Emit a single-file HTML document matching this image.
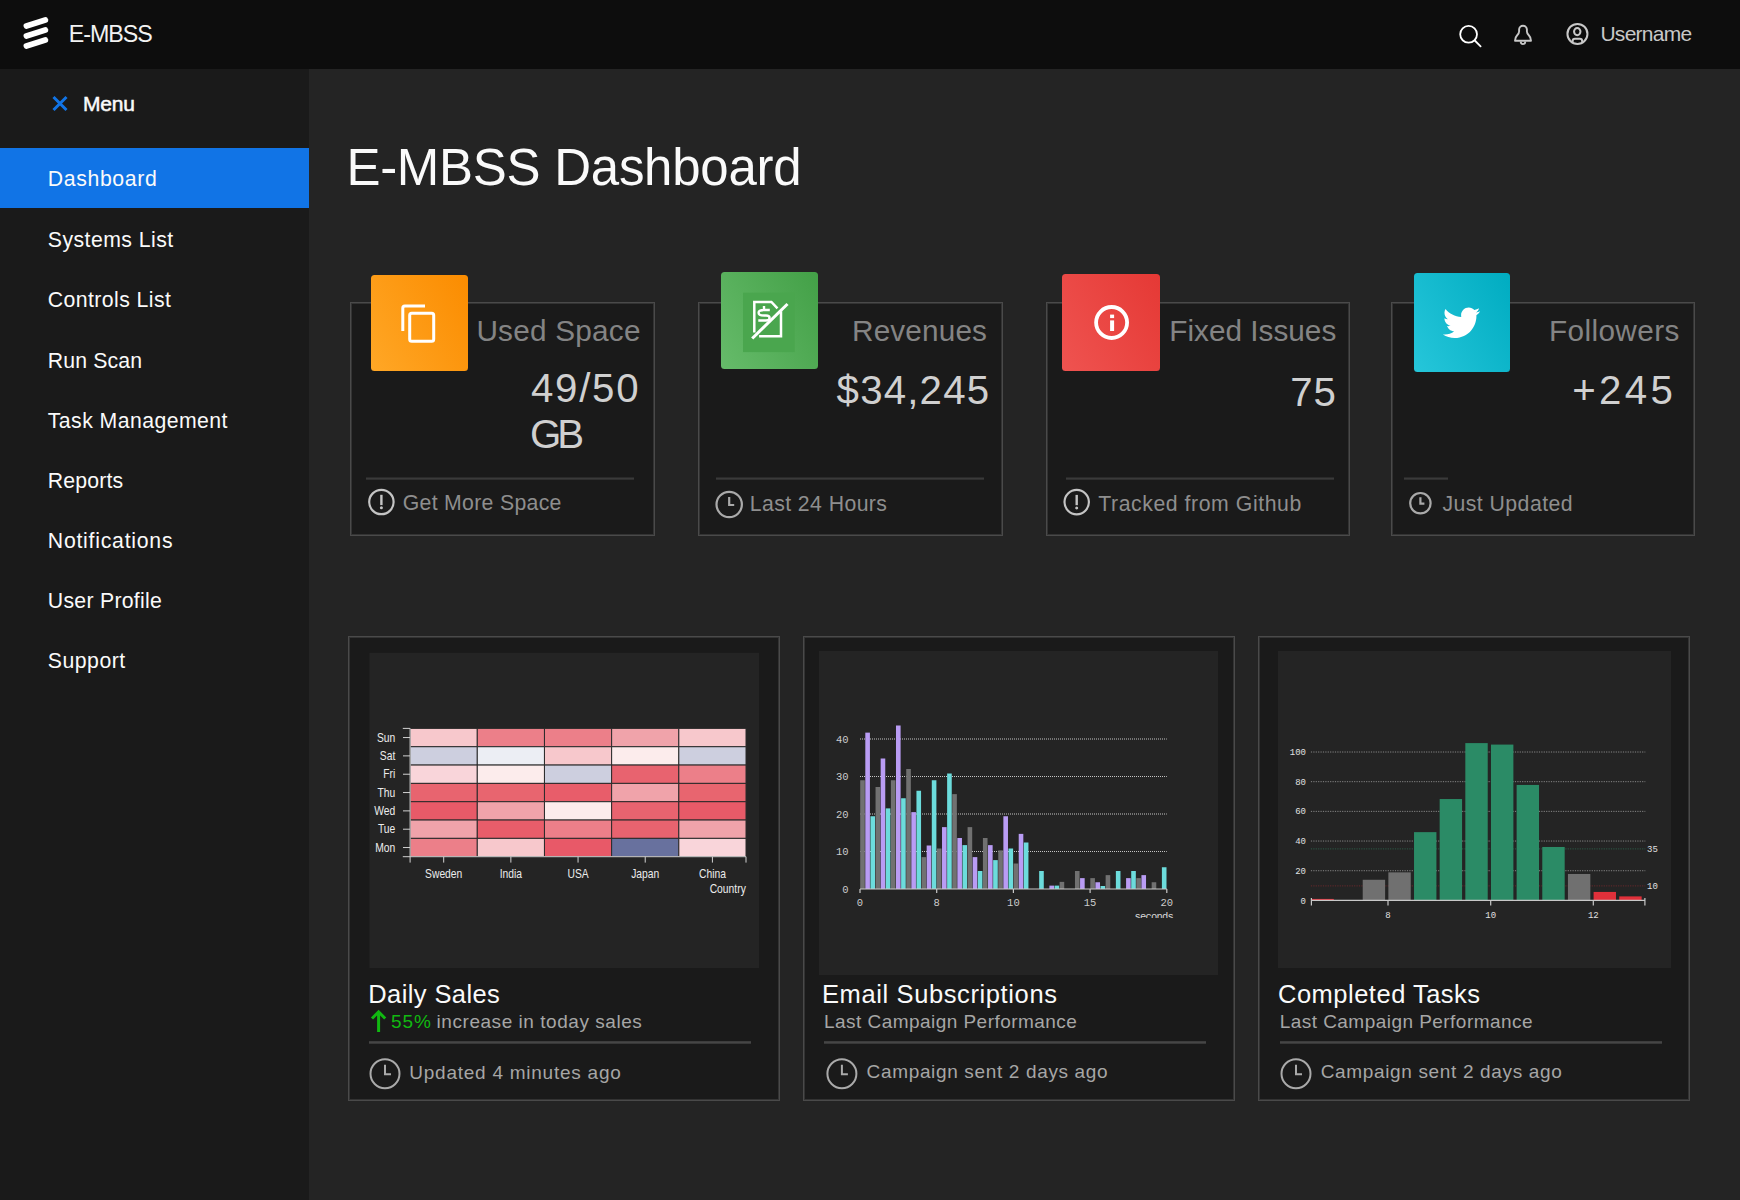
<!DOCTYPE html>
<html><head><meta charset="utf-8"><title>E-MBSS Dashboard</title><style>html,body{margin:0;padding:0;background:#242424;width:1740px;height:1200px;overflow:hidden;font-family:"Liberation Sans",sans-serif}</style></head><body>
<svg width="1740" height="1200" viewBox="0 0 1740 1200" style="position:absolute;left:0;top:0">
<rect x="0" y="0" width="1740" height="1200" fill="#242424"/>
<rect x="0" y="0" width="1740" height="69" fill="#0d0d0d"/>
<rect x="0" y="69" width="309" height="1131" fill="#1a1a1a"/>
<rect x="0" y="148" width="309" height="60" fill="#1174e6"/>
<line x1="26.4" y1="26" x2="45.3" y2="20" stroke="#fff" stroke-width="5.7" stroke-linecap="round"/>
<line x1="26.4" y1="36" x2="45.3" y2="30" stroke="#fff" stroke-width="5.7" stroke-linecap="round"/>
<line x1="26.4" y1="46" x2="45.3" y2="40" stroke="#fff" stroke-width="5.7" stroke-linecap="round"/>
<text x="68.70" y="42.20" font-family="Liberation Sans" font-size="23.25" fill="#f2f2f2" letter-spacing="-1.000">E-MBSS</text>
<circle cx="1468.6" cy="34.3" r="8.4" fill="none" stroke="#fff" stroke-width="1.8"/>
<line x1="1474.8" y1="40.5" x2="1480.6" y2="46.3" stroke="#fff" stroke-width="1.8" stroke-linecap="round"/>
<path d="M1515 40.8 H1531 Q1531 37.5 1529 35.5 Q1526.9 33.5 1526.9 31.5 V29.6 A3.9 3.9 0 0 0 1519.1 29.6 V31.5 Q1519.1 33.5 1517 35.5 Q1515 37.5 1515 40.8 Z" fill="none" stroke="#c8c8c8" stroke-width="1.9" stroke-linejoin="round"/>
<path d="M1520.7 41.6 A2.3 2.5 0 0 0 1525.3 41.6" fill="none" stroke="#c8c8c8" stroke-width="1.9"/>
<circle cx="1577.45" cy="33.9" r="10" fill="none" stroke="#c8c8c8" stroke-width="2"/>
<ellipse cx="1577.25" cy="31.6" rx="3.2" ry="3.6" fill="none" stroke="#c8c8c8" stroke-width="2"/>
<path d="M1572.6 42.6 V41.2 Q1572.6 38.8 1575 38.8 H1579.8 Q1582.2 38.8 1582.2 41.2 V42.6" fill="none" stroke="#c8c8c8" stroke-width="2"/>
<text x="1600.40" y="41.10" font-family="Liberation Sans" font-size="21" fill="#c8c8c8" letter-spacing="-0.714">Username</text>
<path d="M53.5 97 L66.5 110 M66.5 97 L53.5 110" stroke="#1174e6" stroke-width="3"/>
<text x="83.00" y="110.90" font-family="Liberation Sans" font-size="21" fill="#fafafa" letter-spacing="-0.200" stroke="#fafafa" stroke-width="0.5">Menu</text>
<text x="47.80" y="186.20" font-family="Liberation Sans" font-size="21.25" fill="#fafafa" letter-spacing="0.625">Dashboard</text>
<text x="47.80" y="247.00" font-family="Liberation Sans" font-size="21.25" fill="#fafafa" letter-spacing="0.455">Systems List</text>
<text x="47.80" y="307.10" font-family="Liberation Sans" font-size="21.25" fill="#fafafa" letter-spacing="0.417">Controls List</text>
<text x="47.80" y="368.00" font-family="Liberation Sans" font-size="21.25" fill="#fafafa" letter-spacing="0.143">Run Scan</text>
<text x="47.80" y="427.70" font-family="Liberation Sans" font-size="21.25" fill="#fafafa" letter-spacing="0.429">Task Management</text>
<text x="47.80" y="487.90" font-family="Liberation Sans" font-size="21.25" fill="#fafafa" letter-spacing="0.167">Reports</text>
<text x="47.80" y="548.00" font-family="Liberation Sans" font-size="21.25" fill="#fafafa" letter-spacing="0.750">Notifications</text>
<text x="47.80" y="607.60" font-family="Liberation Sans" font-size="21.25" fill="#fafafa" letter-spacing="0.273">User Profile</text>
<text x="47.80" y="668.10" font-family="Liberation Sans" font-size="21.25" fill="#fafafa" letter-spacing="0.500">Support</text>
<text x="346.40" y="185.30" font-family="Liberation Sans" font-size="51.0" fill="#fafafa" letter-spacing="-0.267">E-MBSS Dashboard</text>
<rect x="350.5" y="302.5" width="304" height="233.0" fill="#1a1a1a" stroke="#4a4a4a" stroke-width="1"/>
<rect x="351.5" y="303.5" width="302" height="231.0" fill="none" stroke="#333" stroke-width="1"/>
<rect x="698.5" y="302.5" width="304" height="233.0" fill="#1a1a1a" stroke="#4a4a4a" stroke-width="1"/>
<rect x="699.5" y="303.5" width="302" height="231.0" fill="none" stroke="#333" stroke-width="1"/>
<rect x="1046.5" y="302.5" width="303" height="233.0" fill="#1a1a1a" stroke="#4a4a4a" stroke-width="1"/>
<rect x="1047.5" y="303.5" width="301" height="231.0" fill="none" stroke="#333" stroke-width="1"/>
<rect x="1391.5" y="302.5" width="303" height="233.0" fill="#1a1a1a" stroke="#4a4a4a" stroke-width="1"/>
<rect x="1392.5" y="303.5" width="301" height="231.0" fill="none" stroke="#333" stroke-width="1"/>
<rect x="366" y="477.5" width="268" height="2.2" fill="#3a3a3a"/>
<rect x="716" y="477.5" width="268" height="2.2" fill="#3a3a3a"/>
<rect x="1066" y="477.5" width="268" height="2.2" fill="#3a3a3a"/>
<rect x="1404" y="477.5" width="44" height="2.2" fill="#3a3a3a"/>
<defs>
<linearGradient id="grado" x1="-0.0915" y1="0.8415" x2="1.0915" y2="0.1585"><stop offset="0" stop-color="#ffa726"/><stop offset="1" stop-color="#fb8c00"/></linearGradient>
<linearGradient id="gradg" x1="-0.0915" y1="0.8415" x2="1.0915" y2="0.1585"><stop offset="0" stop-color="#66bb6a"/><stop offset="1" stop-color="#43a047"/></linearGradient>
<linearGradient id="gradr" x1="-0.0915" y1="0.8415" x2="1.0915" y2="0.1585"><stop offset="0" stop-color="#ef5350"/><stop offset="1" stop-color="#e53935"/></linearGradient>
<linearGradient id="gradc" x1="-0.0915" y1="0.8415" x2="1.0915" y2="0.1585"><stop offset="0" stop-color="#26c6da"/><stop offset="1" stop-color="#00acc1"/></linearGradient>
</defs>
<rect x="371" y="275" width="97" height="96" rx="3.5" fill="url(#grado)"/>
<rect x="721" y="272" width="97" height="97" rx="3.5" fill="url(#gradg)"/>
<rect x="1062" y="274" width="98" height="97" rx="3.5" fill="url(#gradr)"/>
<rect x="1414" y="273" width="96" height="99" rx="3.5" fill="url(#gradc)"/>
<path d="M402.8 331 V308 Q402.8 306 404.8 306 H425" fill="none" stroke="#fff" stroke-width="3"/>
<rect x="409.7" y="313.3" width="24" height="28" rx="2" fill="none" stroke="#fff" stroke-width="3"/>
<rect x="743" y="292.7" width="51.7" height="59.4" fill="#4aa64e"/>
<path d="M754.3 332.5 V302 H771.4 L777.5 308.3 M781 311.3 V336.2 H759.1" fill="none" stroke="#fff" stroke-width="2.5"/>
<line x1="752.2" y1="338.5" x2="787.5" y2="304" stroke="#fff" stroke-width="3"/>
<path d="M764 306 V310 M769.8 310 H764 Q758.6 310 758.6 312.75 Q758.6 315.5 764 315.5 H766 Q769.6 315.5 769.6 318 Q769.6 320.5 766 320.5 H758.3" fill="none" stroke="#fff" stroke-width="2.4"/>
<circle cx="1111.6" cy="322.5" r="15.5" fill="none" stroke="#fff" stroke-width="3.8"/>
<rect x="1110.1" y="314.6" width="4" height="3.5" fill="#fff"/>
<rect x="1110.1" y="320.4" width="4" height="10.6" fill="#fff"/>
<g transform="translate(1442.9,304.1) scale(0.0729)"><path fill="#fff" d="M459.37 151.716c.325 4.548.325 9.097.325 13.645 0 138.72-105.583 298.558-298.558 298.558-59.452 0-114.68-17.219-161.137-47.106 8.447.974 16.568 1.299 25.34 1.299 49.055 0 94.213-16.568 130.274-44.832-46.132-.975-84.792-31.188-98.112-72.772 6.498.974 12.995 1.624 19.818 1.624 9.421 0 18.843-1.3 27.614-3.573-48.081-9.747-84.143-51.98-84.143-102.985v-1.299c13.969 7.797 30.214 12.67 47.431 13.319-28.264-18.843-46.781-51.005-46.781-87.391 0-19.492 5.197-37.36 14.294-52.954 51.655 63.675 129.3 105.258 216.365 109.807-1.624-7.797-2.599-15.918-2.599-24.04 0-57.828 46.782-104.934 104.934-104.934 30.213 0 57.502 12.67 76.67 33.137 23.715-4.548 46.456-13.645 66.599-25.34-7.798 24.366-24.366 44.833-46.132 57.827 21.117-2.273 41.584-8.122 60.426-16.243-14.292 20.791-32.161 39.308-52.628 54.253z"/></g>
<text x="476.40" y="341.00" font-family="Liberation Sans" font-size="29.75" fill="#848484" letter-spacing="0.222">Used Space</text>
<text x="852.00" y="341.00" font-family="Liberation Sans" font-size="29.75" fill="#848484" letter-spacing="0.143">Revenues</text>
<text x="1169.30" y="341.10" font-family="Liberation Sans" font-size="29.75" fill="#848484" letter-spacing="0.000">Fixed Issues</text>
<text x="1549.00" y="341.30" font-family="Liberation Sans" font-size="29.75" fill="#848484" letter-spacing="0.375">Followers</text>
<text x="530.90" y="402.25" font-family="Liberation Sans" font-size="40.25" fill="#d0d0d0" letter-spacing="1.750">49/50</text>
<text x="529.90" y="447.50" font-family="Liberation Sans" font-size="40.25" fill="#d0d0d0" letter-spacing="-4.000">GB</text>
<text x="836.60" y="404.30" font-family="Liberation Sans" font-size="40.25" fill="#d0d0d0" letter-spacing="1.167">$34,245</text>
<text x="1290.20" y="406.10" font-family="Liberation Sans" font-size="40.25" fill="#d0d0d0" letter-spacing="1.000">75</text>
<text x="1572.20" y="404.30" font-family="Liberation Sans" font-size="40.25" fill="#d0d0d0" letter-spacing="3.333">+245</text>
<circle cx="381.4" cy="502" r="12.2" fill="none" stroke="#c4c4c4" stroke-width="2.2"/>
<rect x="380.2" y="494.8" width="2.4" height="10.3" fill="#c4c4c4"/>
<circle cx="381.4" cy="507.8" r="1.5" fill="#c4c4c4"/>
<circle cx="729.2" cy="504.5" r="12.7" fill="none" stroke="#aaaaaa" stroke-width="2.2"/>
<path d="M729.2 497.0 V505.0 H734.2" fill="none" stroke="#aaaaaa" stroke-width="2.2"/>
<circle cx="1076.7" cy="502.1" r="12.2" fill="none" stroke="#c4c4c4" stroke-width="2.2"/>
<rect x="1075.5" y="494.90000000000003" width="2.4" height="10.3" fill="#c4c4c4"/>
<circle cx="1076.7" cy="507.90000000000003" r="1.5" fill="#c4c4c4"/>
<circle cx="1420.4" cy="503.2" r="10.2" fill="none" stroke="#aaaaaa" stroke-width="2.2"/>
<path d="M1420.4 497.2 V503.59999999999997 H1424.4" fill="none" stroke="#aaaaaa" stroke-width="2.2"/>
<text x="402.70" y="509.80" font-family="Liberation Sans" font-size="21.25" fill="#8e8e8e" letter-spacing="0.308">Get More Space</text>
<text x="749.70" y="510.50" font-family="Liberation Sans" font-size="21.25" fill="#8e8e8e" letter-spacing="0.417">Last 24 Hours</text>
<text x="1098.30" y="510.50" font-family="Liberation Sans" font-size="21.25" fill="#8e8e8e" letter-spacing="0.556">Tracked from Github</text>
<text x="1442.40" y="510.50" font-family="Liberation Sans" font-size="21.25" fill="#8e8e8e" letter-spacing="0.455">Just Updated</text>
<rect x="348.5" y="636.5" width="431" height="464.0" fill="#1a1a1a" stroke="#4a4a4a" stroke-width="1"/>
<rect x="349.5" y="637.5" width="429" height="462.0" fill="none" stroke="#333" stroke-width="1"/>
<rect x="803.5" y="636.5" width="431" height="464.0" fill="#1a1a1a" stroke="#4a4a4a" stroke-width="1"/>
<rect x="804.5" y="637.5" width="429" height="462.0" fill="none" stroke="#333" stroke-width="1"/>
<rect x="1258.5" y="636.5" width="431" height="464.0" fill="#1a1a1a" stroke="#4a4a4a" stroke-width="1"/>
<rect x="1259.5" y="637.5" width="429" height="462.0" fill="none" stroke="#333" stroke-width="1"/>
<rect x="369.5" y="652.8" width="389.5" height="315.20000000000005" fill="#242424"/>
<rect x="819" y="651" width="399" height="324" fill="#242424"/>
<rect x="1278" y="651" width="393" height="317" fill="#242424"/>
<rect x="369" y="1041.2" width="382" height="2.5" fill="#464646"/>
<rect x="824" y="1041.2" width="382" height="2.5" fill="#464646"/>
<rect x="1280" y="1041.2" width="382" height="2.5" fill="#464646"/>
<text x="368.30" y="1002.90" font-family="Liberation Sans" font-size="25.5" fill="#fafafa" letter-spacing="0.400">Daily Sales</text>
<text x="390.90" y="1028.00" font-family="Liberation Sans" font-size="19.0" fill="#11b811" letter-spacing="1.000">55%</text>
<text x="436.60" y="1028.00" font-family="Liberation Sans" font-size="19.0" fill="#a6a6a6" letter-spacing="0.545">increase in today sales</text>
<path d="M378.6 1032 V1013 M372 1018.5 L378.6 1011.8 L385.2 1018.5" fill="none" stroke="#11b811" stroke-width="3"/>
<text x="409.30" y="1079.30" font-family="Liberation Sans" font-size="19.0" fill="#a6a6a6" letter-spacing="0.750">Updated 4 minutes ago</text>
<text x="822.00" y="1002.90" font-family="Liberation Sans" font-size="25.5" fill="#fafafa" letter-spacing="0.611">Email Subscriptions</text>
<text x="824.00" y="1028.00" font-family="Liberation Sans" font-size="19.0" fill="#a6a6a6" letter-spacing="0.458">Last Campaign Performance</text>
<text x="866.60" y="1078.40" font-family="Liberation Sans" font-size="19.0" fill="#a6a6a6" letter-spacing="0.652">Campaign sent 2 days ago</text>
<text x="1278.00" y="1002.90" font-family="Liberation Sans" font-size="25.5" fill="#fafafa" letter-spacing="0.500">Completed Tasks</text>
<text x="1279.70" y="1028.00" font-family="Liberation Sans" font-size="19.0" fill="#a6a6a6" letter-spacing="0.458">Last Campaign Performance</text>
<text x="1320.70" y="1078.40" font-family="Liberation Sans" font-size="19.0" fill="#a6a6a6" letter-spacing="0.652">Campaign sent 2 days ago</text>
<circle cx="385" cy="1073.75" r="14.5" fill="none" stroke="#aaaaaa" stroke-width="2"/>
<path d="M385 1064.75 V1074.35 H391.0" fill="none" stroke="#aaaaaa" stroke-width="2"/>
<circle cx="841.9" cy="1073.75" r="14.5" fill="none" stroke="#aaaaaa" stroke-width="2"/>
<path d="M841.9 1064.75 V1074.35 H847.9" fill="none" stroke="#aaaaaa" stroke-width="2"/>
<circle cx="1296" cy="1073.75" r="14.5" fill="none" stroke="#aaaaaa" stroke-width="2"/>
<path d="M1296 1064.75 V1074.35 H1302.0" fill="none" stroke="#aaaaaa" stroke-width="2"/>
<rect x="410.10" y="728.40" width="67.18" height="18.33" fill="#f7c8cc" stroke="#2b2b2b" stroke-width="1"/>
<rect x="477.28" y="728.40" width="67.18" height="18.33" fill="#ec7f89" stroke="#2b2b2b" stroke-width="1"/>
<rect x="544.46" y="728.40" width="67.18" height="18.33" fill="#ec7f89" stroke="#2b2b2b" stroke-width="1"/>
<rect x="611.64" y="728.40" width="67.18" height="18.33" fill="#f0a3aa" stroke="#2b2b2b" stroke-width="1"/>
<rect x="678.82" y="728.40" width="67.18" height="18.33" fill="#f7c8cc" stroke="#2b2b2b" stroke-width="1"/>
<rect x="410.10" y="746.73" width="67.18" height="18.33" fill="#cdcfdf" stroke="#2b2b2b" stroke-width="1"/>
<rect x="477.28" y="746.73" width="67.18" height="18.33" fill="#eceef4" stroke="#2b2b2b" stroke-width="1"/>
<rect x="544.46" y="746.73" width="67.18" height="18.33" fill="#f7c8cc" stroke="#2b2b2b" stroke-width="1"/>
<rect x="611.64" y="746.73" width="67.18" height="18.33" fill="#fcecec" stroke="#2b2b2b" stroke-width="1"/>
<rect x="678.82" y="746.73" width="67.18" height="18.33" fill="#cdcfdf" stroke="#2b2b2b" stroke-width="1"/>
<rect x="410.10" y="765.06" width="67.18" height="18.33" fill="#f9d5da" stroke="#2b2b2b" stroke-width="1"/>
<rect x="477.28" y="765.06" width="67.18" height="18.33" fill="#fcecec" stroke="#2b2b2b" stroke-width="1"/>
<rect x="544.46" y="765.06" width="67.18" height="18.33" fill="#cdcfdf" stroke="#2b2b2b" stroke-width="1"/>
<rect x="611.64" y="765.06" width="67.18" height="18.33" fill="#e8636f" stroke="#2b2b2b" stroke-width="1"/>
<rect x="678.82" y="765.06" width="67.18" height="18.33" fill="#ec7f89" stroke="#2b2b2b" stroke-width="1"/>
<rect x="410.10" y="783.39" width="67.18" height="18.33" fill="#e8646f" stroke="#2b2b2b" stroke-width="1"/>
<rect x="477.28" y="783.39" width="67.18" height="18.33" fill="#e8656f" stroke="#2b2b2b" stroke-width="1"/>
<rect x="544.46" y="783.39" width="67.18" height="18.33" fill="#e85d6a" stroke="#2b2b2b" stroke-width="1"/>
<rect x="611.64" y="783.39" width="67.18" height="18.33" fill="#f0a3aa" stroke="#2b2b2b" stroke-width="1"/>
<rect x="678.82" y="783.39" width="67.18" height="18.33" fill="#e8656f" stroke="#2b2b2b" stroke-width="1"/>
<rect x="410.10" y="801.71" width="67.18" height="18.33" fill="#e85a68" stroke="#2b2b2b" stroke-width="1"/>
<rect x="477.28" y="801.71" width="67.18" height="18.33" fill="#f0a3aa" stroke="#2b2b2b" stroke-width="1"/>
<rect x="544.46" y="801.71" width="67.18" height="18.33" fill="#fcecec" stroke="#2b2b2b" stroke-width="1"/>
<rect x="611.64" y="801.71" width="67.18" height="18.33" fill="#e8636f" stroke="#2b2b2b" stroke-width="1"/>
<rect x="678.82" y="801.71" width="67.18" height="18.33" fill="#e85a68" stroke="#2b2b2b" stroke-width="1"/>
<rect x="410.10" y="820.04" width="67.18" height="18.33" fill="#f0a3aa" stroke="#2b2b2b" stroke-width="1"/>
<rect x="477.28" y="820.04" width="67.18" height="18.33" fill="#e85d6a" stroke="#2b2b2b" stroke-width="1"/>
<rect x="544.46" y="820.04" width="67.18" height="18.33" fill="#ec7f89" stroke="#2b2b2b" stroke-width="1"/>
<rect x="611.64" y="820.04" width="67.18" height="18.33" fill="#e8636f" stroke="#2b2b2b" stroke-width="1"/>
<rect x="678.82" y="820.04" width="67.18" height="18.33" fill="#f0a3aa" stroke="#2b2b2b" stroke-width="1"/>
<rect x="410.10" y="838.37" width="67.18" height="18.33" fill="#ec7f89" stroke="#2b2b2b" stroke-width="1"/>
<rect x="477.28" y="838.37" width="67.18" height="18.33" fill="#f7c8cc" stroke="#2b2b2b" stroke-width="1"/>
<rect x="544.46" y="838.37" width="67.18" height="18.33" fill="#e85968" stroke="#2b2b2b" stroke-width="1"/>
<rect x="611.64" y="838.37" width="67.18" height="18.33" fill="#68719e" stroke="#2b2b2b" stroke-width="1"/>
<rect x="678.82" y="838.37" width="67.18" height="18.33" fill="#f9d5da" stroke="#2b2b2b" stroke-width="1"/>
<path d="M402.8 728.4 H410.1 V856.7 H402.8 M410.1 856.7 H746.0 M410.1 856.7 V862.6 M746.0 856.7 V862.6" fill="none" stroke="#d2d2d2" stroke-width="1"/>
<line x1="403" y1="737.56" x2="410.1" y2="737.56" stroke="#d2d2d2" stroke-width="1"/>
<text transform="translate(395.3,741.66) scale(0.86,1)" text-anchor="end" font-family="Liberation Sans" font-size="12" fill="#ececec">Sun</text>
<line x1="403" y1="755.89" x2="410.1" y2="755.89" stroke="#d2d2d2" stroke-width="1"/>
<text transform="translate(395.3,759.99) scale(0.86,1)" text-anchor="end" font-family="Liberation Sans" font-size="12" fill="#ececec">Sat</text>
<line x1="403" y1="774.22" x2="410.1" y2="774.22" stroke="#d2d2d2" stroke-width="1"/>
<text transform="translate(395.3,778.32) scale(0.86,1)" text-anchor="end" font-family="Liberation Sans" font-size="12" fill="#ececec">Fri</text>
<line x1="403" y1="792.55" x2="410.1" y2="792.55" stroke="#d2d2d2" stroke-width="1"/>
<text transform="translate(395.3,796.65) scale(0.86,1)" text-anchor="end" font-family="Liberation Sans" font-size="12" fill="#ececec">Thu</text>
<line x1="403" y1="810.88" x2="410.1" y2="810.88" stroke="#d2d2d2" stroke-width="1"/>
<text transform="translate(395.3,814.98) scale(0.86,1)" text-anchor="end" font-family="Liberation Sans" font-size="12" fill="#ececec">Wed</text>
<line x1="403" y1="829.21" x2="410.1" y2="829.21" stroke="#d2d2d2" stroke-width="1"/>
<text transform="translate(395.3,833.31) scale(0.86,1)" text-anchor="end" font-family="Liberation Sans" font-size="12" fill="#ececec">Tue</text>
<line x1="403" y1="847.54" x2="410.1" y2="847.54" stroke="#d2d2d2" stroke-width="1"/>
<text transform="translate(395.3,851.64) scale(0.86,1)" text-anchor="end" font-family="Liberation Sans" font-size="12" fill="#ececec">Mon</text>
<line x1="443.69" y1="856.7" x2="443.69" y2="862.6" stroke="#d2d2d2" stroke-width="1"/>
<text transform="translate(443.69,877.8) scale(0.86,1)" text-anchor="middle" font-family="Liberation Sans" font-size="12" fill="#ececec">Sweden</text>
<line x1="510.87" y1="856.7" x2="510.87" y2="862.6" stroke="#d2d2d2" stroke-width="1"/>
<text transform="translate(510.87,877.8) scale(0.86,1)" text-anchor="middle" font-family="Liberation Sans" font-size="12" fill="#ececec">India</text>
<line x1="578.05" y1="856.7" x2="578.05" y2="862.6" stroke="#d2d2d2" stroke-width="1"/>
<text transform="translate(578.05,877.8) scale(0.86,1)" text-anchor="middle" font-family="Liberation Sans" font-size="12" fill="#ececec">USA</text>
<line x1="645.23" y1="856.7" x2="645.23" y2="862.6" stroke="#d2d2d2" stroke-width="1"/>
<text transform="translate(645.23,877.8) scale(0.86,1)" text-anchor="middle" font-family="Liberation Sans" font-size="12" fill="#ececec">Japan</text>
<line x1="712.41" y1="856.7" x2="712.41" y2="862.6" stroke="#d2d2d2" stroke-width="1"/>
<text transform="translate(712.41,877.8) scale(0.86,1)" text-anchor="middle" font-family="Liberation Sans" font-size="12" fill="#ececec">China</text>
<text transform="translate(745.8,893.4) scale(0.86,1)" text-anchor="end" font-family="Liberation Sans" font-size="12" fill="#ececec">Country</text>
<line x1="860.0" y1="851.50" x2="1166.8" y2="851.50" stroke="#c4c4c4" stroke-width="1" stroke-dasharray="1,1"/>
<line x1="860.0" y1="814.00" x2="1166.8" y2="814.00" stroke="#c4c4c4" stroke-width="1" stroke-dasharray="1,1"/>
<line x1="860.0" y1="776.50" x2="1166.8" y2="776.50" stroke="#c4c4c4" stroke-width="1" stroke-dasharray="1,1"/>
<line x1="860.0" y1="739.00" x2="1166.8" y2="739.00" stroke="#c4c4c4" stroke-width="1" stroke-dasharray="1,1"/>
<rect x="860.20" y="780.25" width="4.61" height="108.75" fill="#717171"/>
<rect x="865.31" y="732.62" width="4.61" height="156.38" fill="#b99cf4"/>
<rect x="870.43" y="816.25" width="4.61" height="72.75" fill="#6cdcdc"/>
<rect x="875.54" y="787.00" width="4.61" height="102.00" fill="#717171"/>
<rect x="880.65" y="758.50" width="4.61" height="130.50" fill="#b99cf4"/>
<rect x="885.77" y="808.38" width="4.61" height="80.62" fill="#6cdcdc"/>
<rect x="890.88" y="780.25" width="4.61" height="108.75" fill="#717171"/>
<rect x="895.99" y="725.50" width="4.61" height="163.50" fill="#b99cf4"/>
<rect x="901.11" y="798.25" width="4.61" height="90.75" fill="#6cdcdc"/>
<rect x="906.22" y="769.00" width="4.61" height="120.00" fill="#717171"/>
<rect x="911.33" y="812.12" width="4.61" height="76.88" fill="#b99cf4"/>
<rect x="916.45" y="790.75" width="4.61" height="98.25" fill="#6cdcdc"/>
<rect x="921.56" y="857.12" width="4.61" height="31.88" fill="#717171"/>
<rect x="926.67" y="845.50" width="4.61" height="43.50" fill="#b99cf4"/>
<rect x="931.79" y="780.25" width="4.61" height="108.75" fill="#6cdcdc"/>
<rect x="936.90" y="848.50" width="4.61" height="40.50" fill="#717171"/>
<rect x="942.01" y="827.12" width="4.61" height="61.88" fill="#b99cf4"/>
<rect x="947.13" y="773.50" width="4.61" height="115.50" fill="#6cdcdc"/>
<rect x="952.24" y="794.12" width="4.61" height="94.88" fill="#717171"/>
<rect x="957.35" y="838.00" width="4.61" height="51.00" fill="#b99cf4"/>
<rect x="962.47" y="845.12" width="4.61" height="43.88" fill="#6cdcdc"/>
<rect x="967.58" y="827.12" width="4.61" height="61.88" fill="#717171"/>
<rect x="972.69" y="857.12" width="4.61" height="31.88" fill="#b99cf4"/>
<rect x="977.81" y="871.00" width="4.61" height="18.00" fill="#6cdcdc"/>
<rect x="982.92" y="838.00" width="4.61" height="51.00" fill="#717171"/>
<rect x="988.03" y="845.12" width="4.61" height="43.88" fill="#b99cf4"/>
<rect x="993.15" y="860.12" width="4.61" height="28.88" fill="#6cdcdc"/>
<rect x="998.26" y="850.38" width="4.61" height="38.62" fill="#717171"/>
<rect x="1003.37" y="816.25" width="4.61" height="72.75" fill="#b99cf4"/>
<rect x="1008.49" y="848.50" width="4.61" height="40.50" fill="#6cdcdc"/>
<rect x="1013.60" y="863.50" width="4.61" height="25.50" fill="#717171"/>
<rect x="1018.71" y="833.88" width="4.61" height="55.12" fill="#b99cf4"/>
<rect x="1023.83" y="842.50" width="4.61" height="46.50" fill="#6cdcdc"/>
<rect x="1039.17" y="871.00" width="4.61" height="18.00" fill="#6cdcdc"/>
<rect x="1049.39" y="885.62" width="4.61" height="3.38" fill="#b99cf4"/>
<rect x="1054.51" y="885.62" width="4.61" height="3.38" fill="#6cdcdc"/>
<rect x="1059.62" y="881.88" width="4.61" height="7.12" fill="#717171"/>
<rect x="1074.96" y="871.00" width="4.61" height="18.00" fill="#717171"/>
<rect x="1080.07" y="878.12" width="4.61" height="10.88" fill="#b99cf4"/>
<rect x="1090.30" y="878.12" width="4.61" height="10.88" fill="#717171"/>
<rect x="1095.41" y="882.25" width="4.61" height="6.75" fill="#b99cf4"/>
<rect x="1100.53" y="886.00" width="4.61" height="3.00" fill="#6cdcdc"/>
<rect x="1105.64" y="875.12" width="4.61" height="13.88" fill="#717171"/>
<rect x="1115.87" y="871.00" width="4.61" height="18.00" fill="#6cdcdc"/>
<rect x="1126.09" y="878.12" width="4.61" height="10.88" fill="#b99cf4"/>
<rect x="1131.21" y="871.00" width="4.61" height="18.00" fill="#6cdcdc"/>
<rect x="1136.32" y="878.12" width="4.61" height="10.88" fill="#717171"/>
<rect x="1141.43" y="875.12" width="4.61" height="13.88" fill="#b99cf4"/>
<rect x="1151.66" y="882.25" width="4.61" height="6.75" fill="#717171"/>
<rect x="1161.89" y="867.25" width="4.61" height="21.75" fill="#6cdcdc"/>
<path d="M860.0 889.0 H1166.8" stroke="#c8c8c8" stroke-width="1.2"/>
<line x1="860.00" y1="889.0" x2="860.00" y2="893.0" stroke="#c8c8c8" stroke-width="1.2"/>
<text x="860.00" y="906" text-anchor="middle" font-family="Liberation Mono" font-size="10.5" fill="#cccccc">0</text>
<line x1="936.70" y1="889.0" x2="936.70" y2="893.0" stroke="#c8c8c8" stroke-width="1.2"/>
<text x="936.70" y="906" text-anchor="middle" font-family="Liberation Mono" font-size="10.5" fill="#cccccc">8</text>
<line x1="1013.40" y1="889.0" x2="1013.40" y2="893.0" stroke="#c8c8c8" stroke-width="1.2"/>
<text x="1013.40" y="906" text-anchor="middle" font-family="Liberation Mono" font-size="10.5" fill="#cccccc">10</text>
<line x1="1090.10" y1="889.0" x2="1090.10" y2="893.0" stroke="#c8c8c8" stroke-width="1.2"/>
<text x="1090.10" y="906" text-anchor="middle" font-family="Liberation Mono" font-size="10.5" fill="#cccccc">15</text>
<line x1="1166.80" y1="889.0" x2="1166.80" y2="893.0" stroke="#c8c8c8" stroke-width="1.2"/>
<text x="1166.80" y="906" text-anchor="middle" font-family="Liberation Mono" font-size="10.5" fill="#cccccc">20</text>
<text x="848.5" y="892.60" text-anchor="end" font-family="Liberation Mono" font-size="10.5" fill="#cccccc">0</text>
<text x="848.5" y="855.10" text-anchor="end" font-family="Liberation Mono" font-size="10.5" fill="#cccccc">10</text>
<text x="848.5" y="817.60" text-anchor="end" font-family="Liberation Mono" font-size="10.5" fill="#cccccc">20</text>
<text x="848.5" y="780.10" text-anchor="end" font-family="Liberation Mono" font-size="10.5" fill="#cccccc">30</text>
<text x="848.5" y="742.60" text-anchor="end" font-family="Liberation Mono" font-size="10.5" fill="#cccccc">40</text>
<svg x="1100" y="900" width="100" height="18" overflow="hidden"><text x="73" y="19.5" text-anchor="end" font-family="Liberation Mono" font-size="10.5" letter-spacing="-0.8" fill="#d8d8d8">seconds</text></svg>
<line x1="1310.9" y1="870.72" x2="1645.3" y2="870.72" stroke="#a0a0a0" stroke-width="0.8" stroke-dasharray="1.2,1.2"/>
<line x1="1310.9" y1="841.04" x2="1645.3" y2="841.04" stroke="#a0a0a0" stroke-width="0.8" stroke-dasharray="1.2,1.2"/>
<line x1="1310.9" y1="811.36" x2="1645.3" y2="811.36" stroke="#a0a0a0" stroke-width="0.8" stroke-dasharray="1.2,1.2"/>
<line x1="1310.9" y1="781.68" x2="1645.3" y2="781.68" stroke="#a0a0a0" stroke-width="0.8" stroke-dasharray="1.2,1.2"/>
<line x1="1310.9" y1="752.00" x2="1645.3" y2="752.00" stroke="#a0a0a0" stroke-width="0.8" stroke-dasharray="1.2,1.2"/>
<line x1="1310.9" y1="848.9" x2="1645.3" y2="848.9" stroke="#2e6b50" stroke-width="0.8" stroke-dasharray="1.2,1.2"/>
<line x1="1310.9" y1="885.9" x2="1645.3" y2="885.9" stroke="#7a2a2e" stroke-width="0.8" stroke-dasharray="1.2,1.2"/>
<rect x="1311.40" y="898.92" width="22.4" height="1.48" fill="#e0303a"/>
<rect x="1362.71" y="879.77" width="22.4" height="20.63" fill="#707070"/>
<rect x="1388.36" y="872.35" width="22.4" height="28.05" fill="#707070"/>
<rect x="1414.02" y="832.14" width="22.4" height="68.26" fill="#2b8b66"/>
<rect x="1439.67" y="799.04" width="22.4" height="101.36" fill="#2b8b66"/>
<rect x="1465.32" y="743.10" width="22.4" height="157.30" fill="#2b8b66"/>
<rect x="1490.98" y="744.58" width="22.4" height="155.82" fill="#2b8b66"/>
<rect x="1516.63" y="784.94" width="22.4" height="115.46" fill="#2b8b66"/>
<rect x="1542.28" y="846.98" width="22.4" height="53.42" fill="#2b8b66"/>
<rect x="1567.94" y="873.98" width="22.4" height="26.42" fill="#707070"/>
<rect x="1593.59" y="891.94" width="22.4" height="8.46" fill="#e0303a"/>
<rect x="1619.25" y="896.39" width="22.4" height="4.01" fill="#e0303a"/>
<path d="M1311.4 900.4 H1644.9 M1311.4 897.9 V905.4 M1644.9 897.9 V905.4" fill="none" stroke="#c8c8c8" stroke-width="1.2"/>
<line x1="1388" y1="900.4" x2="1388" y2="905.4" stroke="#c8c8c8" stroke-width="1.2"/>
<text x="1388" y="917.6" text-anchor="middle" font-family="Liberation Mono" font-size="9" fill="#e0e0e0">8</text>
<line x1="1490.7" y1="900.4" x2="1490.7" y2="905.4" stroke="#c8c8c8" stroke-width="1.2"/>
<text x="1490.7" y="917.6" text-anchor="middle" font-family="Liberation Mono" font-size="9" fill="#e0e0e0">10</text>
<line x1="1593.3" y1="900.4" x2="1593.3" y2="905.4" stroke="#c8c8c8" stroke-width="1.2"/>
<text x="1593.3" y="917.6" text-anchor="middle" font-family="Liberation Mono" font-size="9" fill="#e0e0e0">12</text>
<text x="1306" y="903.50" text-anchor="end" font-family="Liberation Mono" font-size="9" fill="#e0e0e0">0</text>
<text x="1306" y="873.82" text-anchor="end" font-family="Liberation Mono" font-size="9" fill="#e0e0e0">20</text>
<text x="1306" y="844.14" text-anchor="end" font-family="Liberation Mono" font-size="9" fill="#e0e0e0">40</text>
<text x="1306" y="814.46" text-anchor="end" font-family="Liberation Mono" font-size="9" fill="#e0e0e0">60</text>
<text x="1306" y="784.78" text-anchor="end" font-family="Liberation Mono" font-size="9" fill="#e0e0e0">80</text>
<text x="1306" y="755.10" text-anchor="end" font-family="Liberation Mono" font-size="9" fill="#e0e0e0">100</text>
<text x="1647" y="852" font-family="Liberation Mono" font-size="9" fill="#e0e0e0">35</text>
<text x="1647" y="889" font-family="Liberation Mono" font-size="9" fill="#e0e0e0">10</text>
</svg>
</body></html>
